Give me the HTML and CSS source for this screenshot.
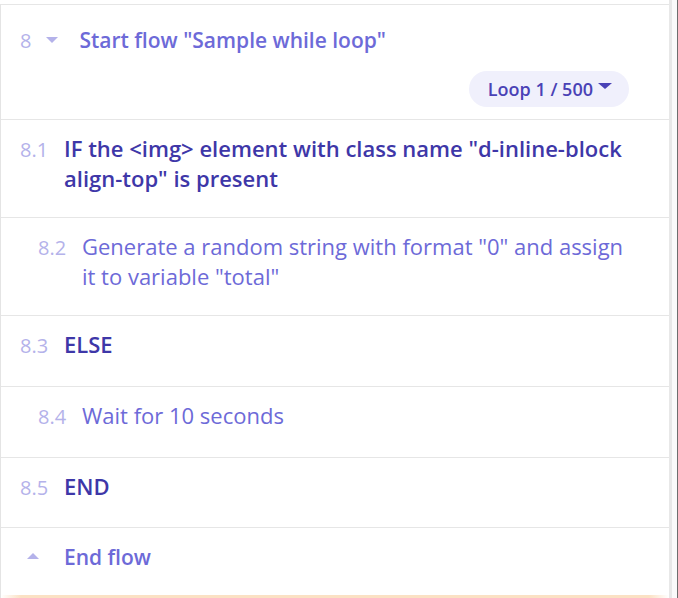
FILE: index.html
```html
<!DOCTYPE html>
<html>
<head>
<meta charset="utf-8">
<link rel="stylesheet" href="styles.css">
</head>
<body>
<div class="frame">
  <div class="card">
    <div class="flow-head">
      <div class="head-line">
        <span class="num">8</span>
        <span class="caret caret-down"></span>
        <span class="flow-title">Start flow "Sample while loop"</span>
      </div>
      <div class="loop-bar">
        <span class="loop-pill">Loop 1 / 500<span class="pill-caret"></span></span>
      </div>
    </div>
    <div class="step">
      <span class="num step-num">8.1</span>
      <span class="step-text strong">IF the &lt;img&gt; element with class name "d-inline-block align-top" is present</span>
    </div>
    <div class="step nested">
      <span class="num step-num">8.2</span>
      <span class="step-text">Generate a random string with format "0" and assign it to variable "total"</span>
    </div>
    <div class="step">
      <span class="num step-num">8.3</span>
      <span class="step-text strong">ELSE</span>
    </div>
    <div class="step nested">
      <span class="num step-num">8.4</span>
      <span class="step-text">Wait for 10 seconds</span>
    </div>
    <div class="step">
      <span class="num step-num">8.5</span>
      <span class="step-text strong">END</span>
    </div>
    <div class="end-row">
      <span class="end-icon"><span class="caret caret-up"></span></span>
      <span class="step-text end-text">End flow</span>
    </div>
    <div class="next-edge"></div>
  </div>
  <div class="gutter"></div>
  <div class="gutter-gap"></div>
  <div class="gutter-line"></div>
</div>
</body>
</html>
```

FILE: styles.css
```css
html, body {
  margin: 0;
  padding: 0;
  background: #ffffff;
}

body {
  font-family: "Open Sans", "Noto Sans", sans-serif;
  font-size: 20px;
  line-height: 30px;
  color: #6d6ad8;
}

.frame {
  display: flex;
  height: 598px;
  overflow: hidden;
}

.card {
  width: 668px;
  flex: none;
  margin-top: 4px;
  border-top: 1px solid #e6e6e6;
  border-left: 1px solid #e4e4e4;
  display: flex;
  flex-direction: column;
}

.gutter {
  width: 3px;
  flex: none;
  background: #e8e8e8;
}

.gutter-gap {
  width: 5px;
  flex: none;
  background: #fafafa;
}

.gutter-line {
  width: 1px;
  flex: none;
  background: #6e6e6e;
}

.flow-head {
  padding: 20px 40px 12px 19px;
  border-bottom: 1px solid #e6e6e6;
}

.head-line {
  display: flex;
  align-items: baseline;
}

.num {
  color: #b4b2ea;
  font-weight: 400;
  font-size: 20px;
}

.caret {
  display: inline-block;
  width: 0;
  height: 0;
  border-left: 6px solid transparent;
  border-right: 6px solid transparent;
}

.caret-down {
  align-self: center;
  border-top: 6px solid #b4b2ea;
  margin-left: 15px;
  margin-right: 21px;
  margin-top: -1px;
}

.caret-up {
  border-bottom: 6px solid #b4b2ea;
}

.flow-title {
  font-size: 21px;
  font-weight: 600;
  color: #6d6ad8;
}

.loop-bar {
  display: flex;
  justify-content: flex-end;
  margin-top: 15px;
}

.loop-pill {
  display: inline-flex;
  align-items: center;
  height: 36px;
  padding: 0 17px 0 19px;
  border-radius: 18px;
  background: #f0f0fc;
  color: #4a42b6;
  font-size: 18px;
  font-weight: 600;
}

.pill-caret {
  display: inline-block;
  width: 0;
  height: 0;
  margin-left: 5px;
  margin-top: -7px;
  border-left: 7px solid transparent;
  border-right: 7px solid transparent;
  border-top: 6px solid #4a42b6;
}

.step {
  display: flex;
  align-items: baseline;
  box-sizing: border-box;
  min-height: 70.5px;
  padding: 13px 40px 24px 19px;
  border-bottom: 1px solid #e6e6e6;
}

.step.nested {
  padding-left: 37px;
  padding-bottom: 25px;
}

.step-num {
  flex: none;
  width: 44px;
}

.step-text {
  flex: 1;
  font-size: 22px;
  color: #6d6ad8;
}

.step-text.strong {
  font-weight: 600;
  color: #3e37a8;
}

.end-row {
  display: flex;
  align-items: center;
  padding: 14px 40px 23px 19px;
}

.end-icon {
  flex: none;
  width: 44px;
  display: flex;
  align-items: center;
  padding-left: 7px;
  box-sizing: border-box;
  margin-top: -2px;
}

.end-text {
  font-size: 21px;
  font-weight: 600;
}

.next-edge {
  height: 3px;
  background: linear-gradient(90deg, rgba(250, 222, 190, 0) 0%, #fbe1c4 3%, #fbe1c4 97%, rgba(250, 222, 190, 0) 100%);
}
```
